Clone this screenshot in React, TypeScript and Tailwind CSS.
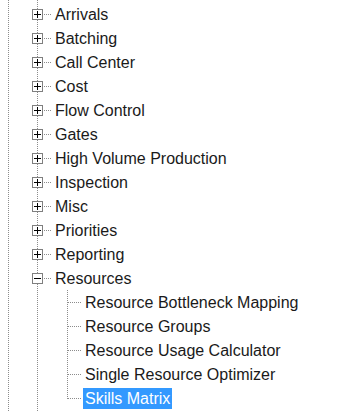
import React from "react";

type Node = { label: string; children?: string[]; selected?: string };

const groups: Node[] = [
  { label: "Arrivals" },
  { label: "Batching" },
  { label: "Call Center" },
  { label: "Cost" },
  { label: "Flow Control" },
  { label: "Gates" },
  { label: "High Volume Production" },
  { label: "Inspection" },
  { label: "Misc" },
  { label: "Priorities" },
  { label: "Reporting" },
  {
    label: "Resources",
    children: [
      "Resource Bottleneck Mapping",
      "Resource Groups",
      "Resource Usage Calculator",
      "Single Resource Optimizer",
      "Skills Matrix",
    ],
    selected: "Skills Matrix",
  },
];

const DOT = "#8c8c8c";

// dotted guide lines, drawn one pixel at a time
const VLine = ({ x, y1 = 0, y2 = 24 }: { x: number; y1?: number; y2?: number }) => {
  const dots = [];
  for (let y = y1; y < y2; y += 2) dots.push(<rect key={y} x={x} y={y} width={1} height={1} fill={DOT} />);
  return <>{dots}</>;
};

const HLine = ({ x1, x2, y = 12 }: { x1: number; x2: number; y?: number }) => {
  const dots = [];
  for (let x = x1; x < x2; x += 2) dots.push(<rect key={x} x={x} y={y} width={1} height={1} fill={DOT} />);
  return <>{dots}</>;
};

const Expander = ({ open }: { open: boolean }) => (
  <g>
    <rect x={32} y={7} width={11} height={11} fill="#7f7f7f" />
    <rect x={33} y={8} width={9} height={9} fill="#fff" />
    <rect x={34} y={12} width={7} height={1} fill="#000" />
    {!open && <rect x={37} y={9} width={1} height={7} fill="#000" />}
  </g>
);

const Label = ({ text, selected }: { text: string; selected?: boolean }) => (
  <span
    className={`h-[21px] px-[2px] leading-[21px] text-[16px] whitespace-nowrap ${
      selected ? "bg-[#3399ff] text-white" : "text-[#1a1a1a]"
    }`}
  >
    {text}
  </span>
);

const Spacer = ({ h }: { h: number }) => (
  <svg width={55} height={h} shapeRendering="crispEdges" className="block">
    <VLine x={8} y2={h} />
    <VLine x={37} y2={h} />
  </svg>
);

export default function App() {
  return (
    <div
      className="w-[343px] h-[412px] overflow-hidden bg-white"
      style={{ fontFamily: '"Liberation Sans", Arial, sans-serif' }}
    >
      <Spacer h={2} />
      {groups.map((g) => (
        <React.Fragment key={g.label}>
          <div className="flex h-[24px] items-center">
            <svg width={53} height={24} shapeRendering="crispEdges" className="block shrink-0">
              <VLine x={8} />
              <VLine x={37} />
              <HLine x1={44} x2={51} />
              <Expander open={!!g.children} />
            </svg>
            <Label text={g.label} />
          </div>
          {g.children?.map((c, i) => {
            const last = i === g.children!.length - 1;
            return (
              <div key={c} className="flex h-[24px] items-center">
                <svg width={83} height={24} shapeRendering="crispEdges" className="block shrink-0">
                  <VLine x={8} />
                  <VLine x={37} />
                  <VLine x={67} y2={last ? 13 : 24} />
                  <HLine x1={68} x2={82} />
                </svg>
                <Label text={c} selected={c === g.selected} />
              </div>
            );
          })}
        </React.Fragment>
      ))}
      <Spacer h={4} />
    </div>
  );
}
